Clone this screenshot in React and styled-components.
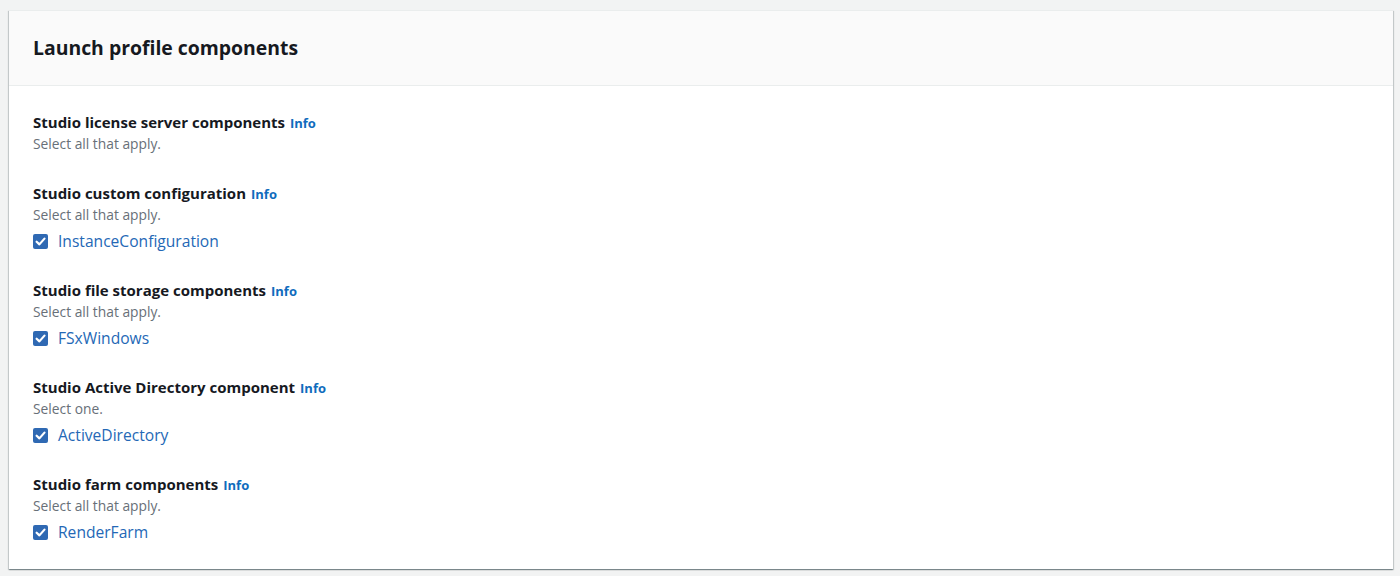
import React from "react";
import styled, { createGlobalStyle } from "styled-components";

const Global = createGlobalStyle`
  html, body { margin: 0; padding: 0; background: #f2f3f3; }
  body { font-family: "Open Sans", "Noto Sans", Arial, sans-serif; color: #16191f; }
`;

const Page = styled.div`
  padding: 10px 7px 7px 9px;
`;

const Card = styled.section`
  width: 1384px;
  background: #ffffff;
  border-top: 1px solid #eaeded;
  box-shadow: 0 1px 1px 0 rgba(0, 28, 36, 0.3), 1px 1px 1px 0 rgba(0, 28, 36, 0.15),
    -1px 1px 1px 0 rgba(0, 28, 36, 0.15);
`;

const Header = styled.header`
  height: 74px;
  display: flex;
  align-items: center;
  padding: 0 24px;
  background: #fafafa;
  border-bottom: 1px solid #eaeded;
`;

const Title = styled.h2`
  margin: 0;
  font-size: 19.4px;
  font-weight: 700;
  line-height: 24px;
  color: #16191f;
`;

const Body = styled.div`
  padding: 25px 24px 26px;
  display: flex;
  flex-direction: column;
  gap: 27px;
`;

const Field = styled.div`
  display: flex;
  flex-direction: column;
`;

const Label = styled.div`
  height: 22px;
  font-size: 15px;
  font-weight: 700;
  line-height: 22px;
  color: #16191f;
`;

const Info = styled.a`
  margin-left: 5px;
  font-size: 13px;
  font-weight: 700;
  line-height: 1;
  color: #0f6cbd;
  text-decoration: none;
`;

const Desc = styled.div`
  font-size: 13.8px;
  line-height: 22px;
  color: #687078;
`;

const CheckRow = styled.label`
  display: flex;
  align-items: center;
  gap: 10px;
  padding-top: 4px;
  height: 22px;
`;

const Box = styled.span`
  width: 15px;
  height: 15px;
  border-radius: 2px;
  background: #2f69b3;
  display: flex;
  align-items: center;
  justify-content: center;
  flex: none;
`;

const CheckText = styled.span`
  font-size: 15.6px;
  line-height: 22px;
  color: #2468b6;
`;

const fields = [
  { label: "Studio license server components", desc: "Select all that apply." },
  { label: "Studio custom configuration", desc: "Select all that apply.", item: "InstanceConfiguration" },
  { label: "Studio file storage components", desc: "Select all that apply.", item: "FSxWindows" },
  { label: "Studio Active Directory component", desc: "Select one.", item: "ActiveDirectory" },
  { label: "Studio farm components", desc: "Select all that apply.", item: "RenderFarm" },
];

export default function App() {
  return (
    <>
      <Global />
      <Page>
        <Card>
          <Header>
            <Title>Launch profile components</Title>
          </Header>
          <Body>
            {fields.map((f) => (
              <Field key={f.label}>
                <Label>
                  {f.label}
                  <Info href="#">Info</Info>
                </Label>
                <Desc>{f.desc}</Desc>
                {f.item && (
                  <CheckRow>
                    <Box>
                      <svg width="11" height="11" viewBox="0 0 10 10">
                        <path d="M1.5 5.2 L4 7.6 L8.6 2.4" fill="none" stroke="#fff" strokeWidth="2" strokeLinecap="round" strokeLinejoin="round" />
                      </svg>
                    </Box>
                    <CheckText>{f.item}</CheckText>
                  </CheckRow>
                )}
              </Field>
            ))}
          </Body>
        </Card>
      </Page>
    </>
  );
}
